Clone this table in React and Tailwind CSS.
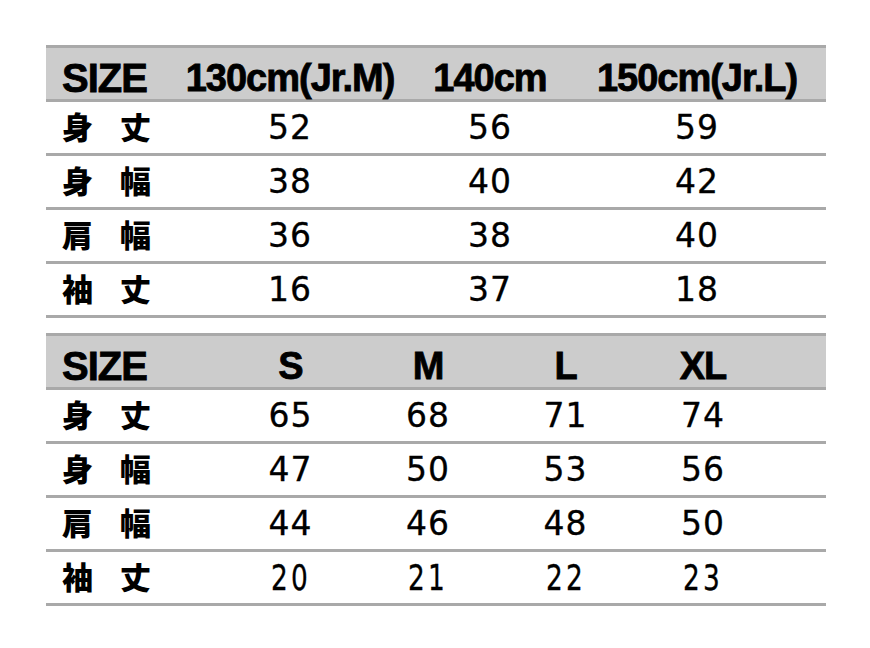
import React from 'react';

const jp = { fontFamily: '"Noto Sans CJK JP", "Noto Sans", sans-serif' };
const latin = { fontFamily: '"Liberation Sans", Arial, sans-serif' };
const digits = { fontFamily: '"DejaVu Sans", "Liberation Sans", sans-serif' };

const labels = [['身', '丈'], ['身', '幅'], ['肩', '幅'], ['袖', '丈']];

const junior = {
  cols: 'grid-cols-[144px_200px_200px_214px_1fr]',
  heads: ['130cm(Jr.M)', '140cm', '150cm(Jr.L)'],
  rows: [
    ['52', '56', '59'],
    ['38', '40', '42'],
    ['36', '38', '40'],
    ['16', '37', '18'],
  ],
};

const adult = {
  cols: 'grid-cols-[176px_137px_138px_137px_138px_1fr]',
  heads: ['S', 'M', 'L', 'XL'],
  rows: [
    ['65', '68', '71', '74'],
    ['47', '50', '53', '56'],
    ['44', '46', '48', '50'],
    ['20', '21', '22', '23'],
  ],
};

const Label = ({ chars }) => (
  <div className="flex items-center gap-[27px] pl-4 pb-1 text-[31px] font-black text-black leading-none" style={jp}>
    <span>{chars[0]}</span>
    <span>{chars[1]}</span>
  </div>
);

const SizeTable = ({ table, narrowLast }) => (
  <div className="border-t-[3px] border-[#a9a9a9]">
    <div className={`grid ${table.cols} h-[54px] bg-[#cccccc] border-b-[3px] border-[#a9a9a9]`}>
      <div className="flex items-center pl-4 text-[40px] font-bold tracking-[-1px] text-black [-webkit-text-stroke:0.8px_black]" style={latin}>SIZE</div>
      {table.heads.map((h) => (
        <div key={h} className="flex items-center justify-center whitespace-nowrap text-[38px] font-bold tracking-[-1px] text-black [-webkit-text-stroke:0.8px_black]" style={latin}>
          {h}
        </div>
      ))}
      <div />
    </div>
    {table.rows.map((row, i) => (
      <div key={i} className={`grid ${table.cols} h-[54px] border-b-[3px] border-[#a9a9a9]`}>
        <Label chars={labels[i]} />
        {row.map((v, j) => (
          <div key={j} className="flex items-center justify-center whitespace-nowrap text-[33px] text-black tracking-[1px] [-webkit-text-stroke:0.3px_black]" style={digits}>
            {narrowLast && i === 3 ? (
              <span className="inline-block scale-x-[0.8] scale-y-[1.1] tracking-[4px]">{v}</span>
            ) : (
              v
            )}
          </div>
        ))}
        <div />
      </div>
    ))}
  </div>
);

export default function App() {
  return (
    <div className="w-[870px] h-[648px] bg-white pt-[45px] pl-[46px]">
      <div className="w-[780px] flex flex-col gap-[15px]">
        <SizeTable table={junior} />
        <SizeTable table={adult} narrowLast />
      </div>
    </div>
  );
}
